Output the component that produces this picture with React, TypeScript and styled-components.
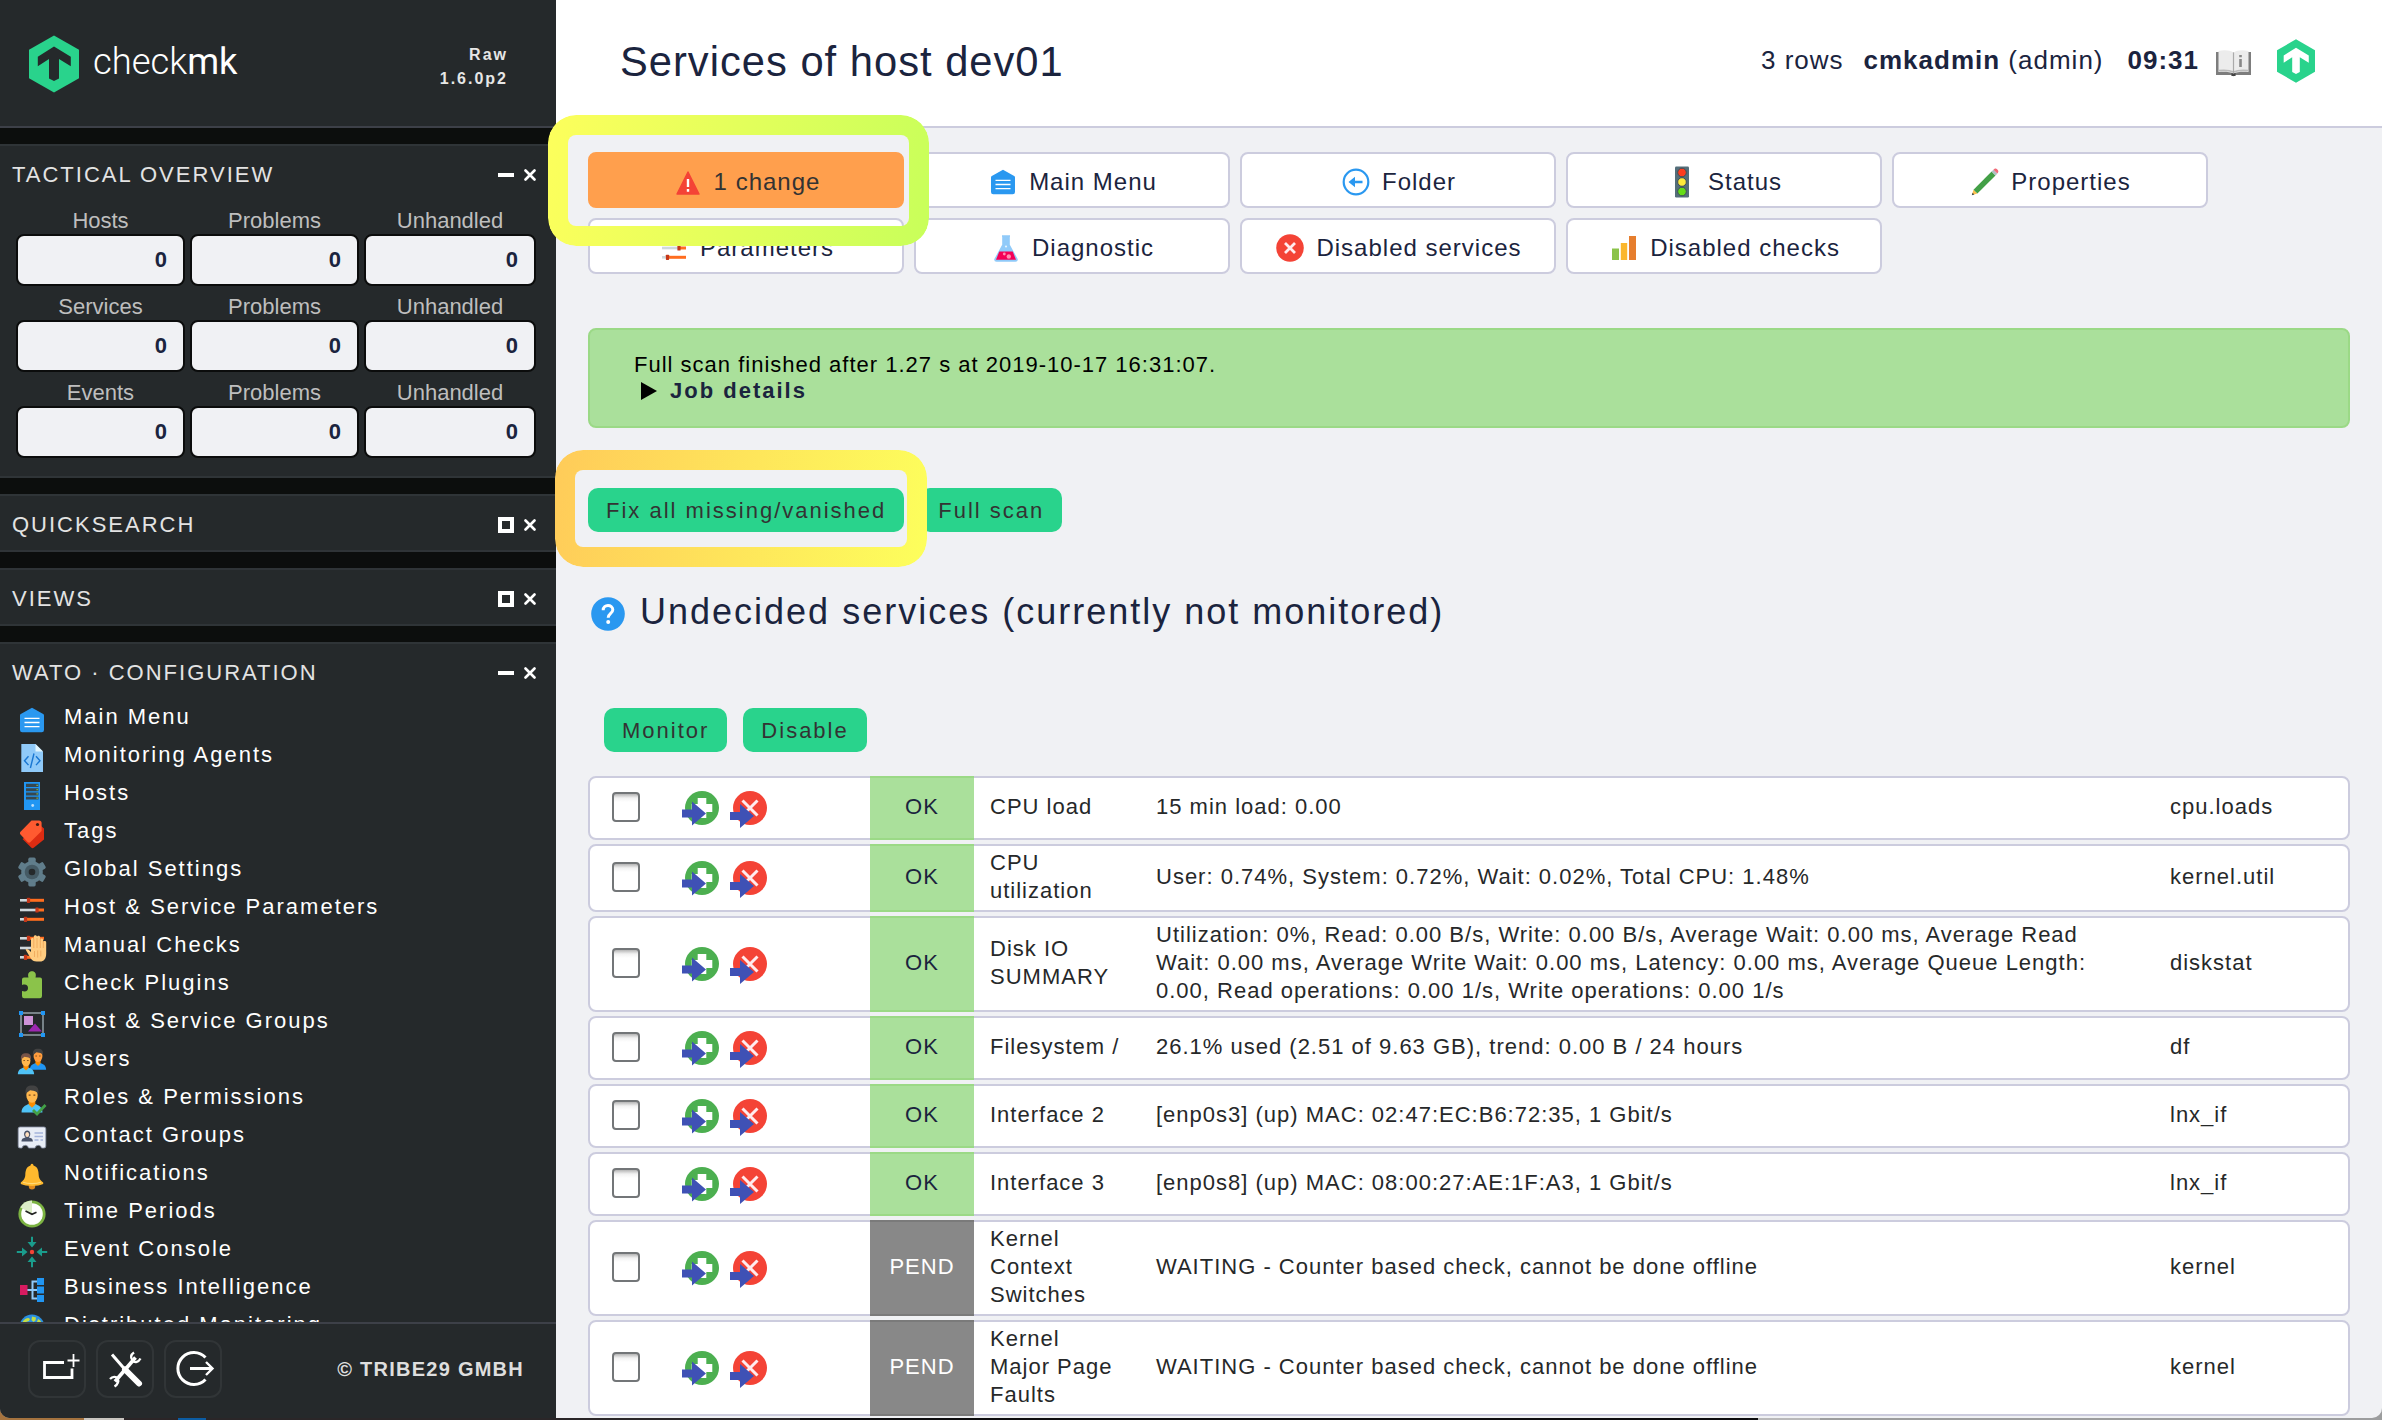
import React from 'react';
import styled, { createGlobalStyle } from 'styled-components';

const font = '"Liberation Sans", Arial, Helvetica, sans-serif';
const navy = '#1b243e';

const GlobalStyle = createGlobalStyle`
  * { box-sizing: border-box; }
  body { margin: 0; background: #1c1c1e; font-family: ${font}; }
`;

/* ---------- shell ---------- */

const Desktop = styled.div`
  position: relative;
  width: 2382px;
  height: 1420px;
  overflow: hidden;
  background: linear-gradient(90deg, #a5733f 0 84px, #c9c5c0 84px 124px, #2b2527 124px 178px, #0b5ca3 178px 206px, #2a2628 206px 800px, #0d0d0f 800px 1758px, #b9b9ba 1758px 1820px, #9c9d9e 1820px);
`;
const BrowserWindow = styled.div`
  display: grid;
  grid-template-columns: 556px 1fr;
  height: 1418px;
  border-radius: 0 0 10px 10px;
  overflow: hidden;
  background: #f0f1f4;
`;
const Sidebar = styled.aside`
  display: flex;
  flex-direction: column;
  min-height: 0;
  height: 1418px;
  background: #25292b;
`;
const Main = styled.main`
  display: flex;
  flex-direction: column;
  min-width: 0;
`;

/* ---------- sidebar ---------- */

const Brand = styled.header`
  display: flex;
  justify-content: space-between;
  height: 128px;
  flex: none;
  padding: 35px 48px 0 29px;
  border-bottom: 2px solid #3d4048;
`;
const BrandName = styled.div`
  display: flex;
  align-items: flex-start;
  gap: 14px;
`;
const Wordmark = styled.span`
  padding-top: 6px;
  font: 300 36.4px/42px Roboto, ${font};
  color: #fff;
  b { font-weight: 400; }
`;
const Version = styled.div`
  padding-top: 8px;
  font-size: 16px;
  font-weight: bold;
  line-height: 24px;
  letter-spacing: 2px;
  text-align: right;
  color: #e6e6e6;
`;
const Snapins = styled.div`
  display: flex;
  flex-direction: column;
  flex: 1;
  min-height: 0;
  overflow: hidden;
  gap: 16px;
  padding-top: 16px;
  background: #0c0e0d;
`;
const Snapin = styled.section<{ $height?: number }>`
  flex: none;
  height: ${p => (p.$height ? `${p.$height}px` : 'auto')};
  border-top: 2px solid #2f3437;
  border-bottom: 2px solid #2f3437;
  background: #25292b;
`;
const SnapinHead = styled.div`
  display: flex;
  align-items: center;
  height: 54px;
  padding: 3px 20px 0 12px;
`;
const SnapinTitle = styled.h2`
  flex: 1;
  margin: 0;
  font-size: 22px;
  font-weight: normal;
  line-height: 26px;
  letter-spacing: 2px;
  color: #e3e3e3;
`;
const SnapinControls = styled.div`
  display: flex;
  align-items: center;
  gap: 10px;
`;
const Tactical = styled.div`
  display: grid;
  grid-template-columns: 169px 169px 172px;
  column-gap: 5px;
  padding: 5px 0 0 16px;
`;
const TacticalLabel = styled.div`
  height: 29px;
  padding-top: 3px;
  font-size: 22px;
  line-height: 25px;
  text-align: center;
  color: #bebebe;
`;
const TacticalValue = styled.div`
  height: 52px;
  margin-bottom: 5px;
  padding-right: 16px;
  border: 2px solid #0b0c0c;
  border-radius: 8px;
  background: #f0f1f4;
  color: ${navy};
  font-size: 22px;
  font-weight: bold;
  line-height: 48px;
  text-align: right;
`;
const Menu = styled.ul`
  margin: 0;
  padding: 6px 0 0 16px;
  list-style: none;
`;
const MenuItem = styled.li`
  display: flex;
  align-items: flex-start;
  gap: 16px;
  height: 38px;
`;
const MenuText = styled.span`
  font-size: 22px;
  line-height: 25px;
  letter-spacing: 2px;
  color: #fff;
`;
const Footer = styled.footer`
  display: flex;
  align-items: flex-start;
  flex: none;
  height: 96px;
  padding: 16px 32px 0 28px;
  gap: 10px;
  border-top: 2px solid #3d4048;
  background: #25292b;
`;
const FootButton = styled.button`
  display: block;
  width: 58px;
  height: 58px;
  padding: 0;
  border: 2px solid #313537;
  border-radius: 12px;
  background: none;
`;
const Copyright = styled.div`
  flex: 1;
  padding-top: 18px;
  font-size: 20px;
  font-weight: bold;
  line-height: 22px;
  letter-spacing: 1.25px;
  text-align: right;
  color: #dedede;
`;

/* ---------- main ---------- */

const TopBar = styled.header`
  display: flex;
  align-items: flex-start;
  height: 128px;
  flex: none;
  padding: 38px 67px 0 64px;
  border-bottom: 2px solid #ccccde;
  background: #fff;
  color: ${navy};
`;
const PageTitle = styled.h1`
  flex: 1;
  margin: 0;
  padding-top: 1px;
  font-size: 41.7px;
  font-weight: normal;
  line-height: 46px;
  letter-spacing: 1px;
`;
const Status = styled.div`
  display: flex;
  padding-top: 7px;
  font-size: 26px;
  line-height: 30px;
  letter-spacing: 1px;
  white-space: pre;
`;
const StatusPart = styled.span<{ $gap?: number; $bold?: boolean; $drop?: number }>`
  margin-left: ${p => p.$gap ?? 0}px;
  padding-top: ${p => p.$drop ?? 0}px;
  font-weight: ${p => (p.$bold ? 'bold' : 'normal')};
`;
const Body = styled.div`
  display: flex;
  flex-direction: column;
  padding: 24px 32px 0 32px;
`;
const ContextLinks = styled.nav`
  display: flex;
  flex-wrap: wrap;
  gap: 10px;
`;
const ContextButton = styled.a<{ $hot?: boolean }>`
  display: flex;
  align-items: center;
  justify-content: center;
  gap: 10px;
  width: 316px;
  height: 56px;
  padding-top: 3px;
  border: 2px solid ${p => (p.$hot ? '#ff9f4d' : '#ccccde')};
  border-radius: 8px;
  background: ${p => (p.$hot ? '#ff9f4d' : '#fff')};
  color: ${p => (p.$hot ? '#333' : navy)};
  font-size: 24px;
  line-height: 28px;
  letter-spacing: 1px;
`;
const ScanResult = styled.div`
  height: 100px;
  margin-top: 54px;
  padding: 22px 44px;
  border: 2px solid #9bd986;
  border-radius: 8px;
  background: #aae09b;
  color: #000;
  font-size: 22px;
  line-height: 26px;
  letter-spacing: 1px;
`;
const JobDetails = styled.div`
  display: flex;
  align-items: center;
  gap: 13px;
  padding-left: 7px;
  color: ${navy};
  font-weight: bold;
  letter-spacing: 2px;
`;
const Actions = styled.div<{ $top: number; $indent?: number }>`
  display: flex;
  gap: 16px;
  margin-top: ${p => p.$top}px;
  padding-left: ${p => p.$indent ?? 0}px;
`;
const ActionButton = styled.button`
  height: 44px;
  padding: 1px 18px 0;
  border: none;
  border-radius: 10px;
  background: #29d38c;
  color: #333;
  font: 22px/43px ${font};
  letter-spacing: 2px;
  white-space: nowrap;
`;
const SectionHead = styled.div`
  display: flex;
  gap: 15px;
  height: 43px;
  margin-top: 59px;
  padding-left: 3px;
`;
const SectionIcon = styled.div`padding-top: 6px;`;
const SectionTitle = styled.h3`
  margin: 0;
  font-size: 36px;
  font-weight: normal;
  line-height: 42px;
  letter-spacing: 2px;
  color: ${navy};
`;
const Services = styled.div`
  display: flex;
  flex-direction: column;
  gap: 4px;
  margin-top: 24px;
`;
const ServiceRow = styled.div`
  display: grid;
  grid-template-columns: 68px 212px 104px 167px 1014px 1fr;
  min-height: 64px;
  border: 2px solid #ccccde;
  border-radius: 8px;
  background: #fff;
  color: #262829;
  font-size: 22px;
  line-height: 28px;
  letter-spacing: 1px;
`;
const Cell = styled.div<{ $left: number; $right?: number }>`
  display: flex;
  align-items: center;
  padding: 3px ${p => p.$right ?? 0}px 5px ${p => p.$left}px;
`;
const Lines = styled.div`white-space: pre-line;`;
const State = styled.div<{ $pend: boolean }>`
  display: flex;
  align-items: center;
  justify-content: center;
  margin: -2px 0;
  padding-bottom: 2px;
  border: solid ${p => (p.$pend ? '#7a7a7a' : '#9bd986')};
  border-width: 2px 0;
  background: ${p => (p.$pend ? '#888' : '#aae09b')};
  color: ${p => (p.$pend ? '#fff' : navy)};
`;
const CheckBox = styled.span`
  display: block;
  width: 28px;
  height: 30px;
  border: 2px solid #737678;
  border-radius: 4px;
  background: linear-gradient(#b5b5b5 0, #f2f2f2 4px, #fff 8px);
`;
const MoveIcons = styled.div`
  display: flex;
  gap: 10px;
  padding: 6px 0 0 24px;
`;
const Marker = styled.div<{ $x: number; $y: number; $w: number; $h: number; $colors: string }>`
  position: absolute;
  left: ${p => p.$x}px;
  top: ${p => p.$y}px;
  width: ${p => p.$w}px;
  height: ${p => p.$h}px;
  padding: 20px;
  border-radius: 28px;
  background: linear-gradient(100deg, ${p => p.$colors});
  mask: linear-gradient(#000 0 0) content-box, linear-gradient(#000 0 0);
  mask-composite: exclude;
  pointer-events: none;
`;
const Svg = styled.svg`display: block; flex: none;`;

/* ---------- icons ---------- */

const Sliders = () => (
  <g>
    {[[6.3, 12.5], [16, 21], [25.3, 9.5]].map(([y, x]) => (
      <g key={y}>
        <path d={`M4 ${y}H${x}`} stroke="#cfd8dc" strokeWidth="2.6" />
        <path d={`M${x} ${y}H28`} stroke="#ff6d1f" strokeWidth="3" />
        <rect x={x - 1.6} y={y - 2.6} width="3.2" height="5.2" rx=".6" fill="#c4371a" />
      </g>
    ))}
  </g>
);
const Head = ({ x, y, s = 1, hair, skin, shirt }: { x: number; y: number; s?: number; hair: string; skin: string; shirt: string }) => (
  <g transform={`translate(${x} ${y}) scale(${s})`}>
    <path d="M-11 28c0-6 4-7.500 7.500-9l3.500 2 3.500-2C7 20.500 11 22 11 28z" fill={shirt} />
    <path d="M-3.500 14h7v5.500L0 23l-3.500-3.500z" fill="#fb8c00" />
    <ellipse cx="0" cy="9.500" rx="6" ry="8" fill={skin} />
    <path d="M-6.800 8C-7.500 1-4-.500 0-.500S7.500 1 6.800 8L5 6.500C3 5 0 5-2 4.500L-5.500 7z" fill={hair} />
    <path d="M-3.500 9.500h2M1.500 9.500h2" stroke="#784719" strokeWidth="1.300" />
  </g>
);

const glyphs: Record<string, React.ReactNode> = {
  menu: <g><path d="M16 3.700l11.200 6.300c.5.300.8.800.8 1.400V26a2.300 2.300 0 0 1-2.300 2.300H6.300A2.300 2.300 0 0 1 4 26V11.400c0-.6.300-1.100.8-1.400z" fill="#2a98f0" /><path d="M8.500 14.300h15M8.500 18.500h15M8.500 22.700h15" stroke="#fff" strokeWidth="1.300" /></g>,
  agents: <g><path d="M5.300 2h14.200L27 9.500V30H5.300z" fill="#90caf9" /><path d="M19.500 2v7.500H27z" fill="#e1f5fe" /><path d="M12.500 14.300L8.500 18.700l4 4.400M20 14.300l4 4.400-4 4.400M18 11.500l-3.600 14.500" fill="none" stroke="#1976d2" strokeWidth="1.400" /></g>,
  hosts: <g><path d="M8 2h16v28H8z" fill="#2196f3" /><path d="M10 3.700h12.500v3.200H10zM10 8.300h12.500v2.900H10zM10 12.500h12.500v2.900H10zM10 16.700h12.500v2.900H10z" fill="#37474f" /><path d="M20.500 4.700h1.300V6h-1.300zM20.500 9h1.300v1.300h-1.300zM20.500 13.200h1.300v1.300h-1.300zM20.500 17.500h1.300v1.300h-1.300z" fill="#8bc34a" /><circle cx="16.700" cy="25.500" r="1.400" fill="#bbdefb" /></g>,
  tags: <g><path d="M25 8l3 2.500v11L18 29.500c-1 .9-1.900.9-2.800 0L6.500 21z" fill="#dd2c12" /><path d="M15.500 2.500H23a2.600 2.600 0 0 1 2.600 2.600v8L14.500 24c-.9.900-2 .900-2.900 0L4.500 16.500c-.8-.800-.8-1.900 0-2.700z" fill="#ff5a30" /><circle cx="21.500" cy="6.500" r="1.600" fill="#3e1b12" /></g>,
  gear: <g><g fill="#607d8b">{[0, 60, 120].map(a => <rect key={a} x="12.300" y="1.600" width="7.400" height="28.800" rx="1.600" transform={`rotate(${a} 16 16)`} />)}<circle cx="16" cy="16" r="10.800" /></g><circle cx="16" cy="16" r="7.300" fill="#455a64" /><circle cx="16" cy="16" r="3.300" fill="#25292b" /></g>,
  params: <Sliders />,
  manual: <g><Sliders /><path d="M9.500 17.500c1.500-1.500 3 0 5.500 2.500V7.500c0-2 2.600-2 2.800 0V4.800c0-2 3-2 3.200 0v.4c.2-2 3-2 3.200.2v2.500c.2-1.800 2.900-1.700 3 .2v2c.2-1.700 3-1.500 3 .3v11c0 5.500-2.500 8-6 8h-3.500c-3 0-4.500-1-6-3.200z" fill="#ffcc80" /><path d="M17.800 7v9M21 6v10M24.300 7v9M27.300 9v7M18.500 19v6M21.700 18.500v7M24.800 18.500v6" stroke="#efa95c" strokeWidth=".9" /></g>,
  puzzle: <path d="M12.500 7.500C11.300 3.500 13 1.200 16 1.200s4.700 2.300 3.500 6.300H24a2 2 0 0 1 2 2V26a2.200 2.200 0 0 1-2.200 2.200H8.200A2.200 2.200 0 0 1 6 26v-5c4 1.200 6-.3 6-3s-2-4.200-6-3V9.500a2 2 0 0 1 2-2z" fill="#8bc34a" />,
  groups: <g><rect x="5" y="5" width="22" height="22" fill="none" stroke="#b0bec5" strokeWidth="1.200" /><path d="M8 8h9v9H8z" fill="#ce93d8" /><path d="M12 23.500l7-8 7 8z" fill="#9c27b0" /><path d="M3 3h4v4H3zM25 3h4v4h-4zM3 25h4v4H3zM25 25h4v4h-4z" fill="#2196f3" /></g>,
  users: <g><Head x={22} y={3} s={0.74} hair="#424242" skin="#ff9d3e" shirt="#2196f3" /><Head x={10} y={7.500} s={0.74} hair="#795548" skin="#ffb74d" shirt="#4fc3f7" /></g>,
  roles: <g><Head x={16} y={2} s={0.95} hair="#424242" skin="#ffb74d" shirt="#4fc3f7" /><path d="M17 26l4 4 8.500-9" fill="none" stroke="#43a047" strokeWidth="2.800" /></g>,
  contacts: <g><path d="M4 5h24a1.800 1.800 0 0 1 1.800 1.800V24A1.800 1.800 0 0 1 28 26h-2.500a3.300 3.300 0 0 0-6.500 0H12.500a3.300 3.300 0 0 0-6.500 0H4a1.800 1.800 0 0 1-1.800-2V6.800A1.800 1.800 0 0 1 4 5z" fill="#e8edf6" stroke="#8a93a8" strokeWidth=".8" /><path d="M5.500 19.500c0-3 2-3.500 4-4-2.500-2.500-1.500-7 1.700-7s4.200 4.500 1.700 7c2 .5 4 1 4 4z" fill="#485268" /><ellipse cx="11.200" cy="12.500" rx="1.900" ry="2.600" fill="#ffe0c0" /><path d="M18.500 11H27M18.500 14.500H27M18.500 18h4M24.500 18H27" stroke="#a4b4dc" strokeWidth="1.400" /></g>,
  bell: <g><circle cx="16" cy="26.300" r="3.200" fill="#e08a1e" /><path d="M14.800 4.500a1.300 1.300 0 0 1 2.400 0l.3 1C22 7 22.500 11 22.700 15c.2 4 2 5.500 4.500 7.500v1.500c-5 2.500-17.400 2.500-22.400 0v-1.500C7.300 20.500 9 19 9.300 15c.2-4 .7-8 5.200-9.500z" fill="#ffb92e" /><path d="M7 22.200c5 1.800 13 1.800 18 0" fill="none" stroke="#ffd978" strokeWidth="1.200" /></g>,
  clock: <g><circle cx="16" cy="16" r="13.600" fill="#7cb342" /><circle cx="16" cy="16" r="10.800" fill="#fff" /><path d="M16 16V2.400A13.600 13.600 0 0 0 4.200 9.300z" fill="#dcedc8" /><path d="M9.500 13l6.500 3.200 4.500-2" fill="none" stroke="#222" strokeWidth="1.700" /></g>,
  event: <g fill="#1a9c8c">{[0, 90, 180, 270].map(a => <path key={a} transform={`rotate(${a} 16 16)`} d="M15 .800h2V6h3.500L16 11.500 11.500 6H15z" />)}<circle cx="16" cy="16" r="2.200" fill="#f44336" /></g>,
  bi: <g><path d="M11 16h10M21.500 7.500h-5v17h5" fill="none" stroke="#90caf9" strokeWidth="2" /><path d="M4 11h7.500v10H4z" fill="#d81b60" /><path d="M21 4h7v7h-7zM21 12.500h7v7h-7zM21 21h7v7h-7z" fill="#2196f3" /></g>,
  globe: <g><circle cx="16" cy="15" r="12.500" fill="#2a8fe0" /><path d="M6 11c1.500-3.500 4-5 6.500-5l1.500 1-1 2-3 1-2 3zM16 4.500l4 1-.5 3-2 1.500-2-2zM22 7c2.500 1 3.500 3 4.500 6l-3-1-2.500-2z" fill="#c2dc45" /></g>,
  warning: <g><path d="M16 6l11 22h-22z" fill="#f44336" strokeLinejoin="round" stroke="#f44336" strokeWidth="1.400" /><path d="M16 13v8M16 23v2.800" stroke="#fff" strokeWidth="2.400" /></g>,
  folder: <g><circle cx="16" cy="16" r="12.300" fill="#fff" stroke="#2a98f0" strokeWidth="2.200" /><path d="M8.500 16l6.500-5.200v3.900h7.500v2.600H15v3.900z" fill="#2a98f0" /></g>,
  lights: <g><rect x="9" y=".5" width="14" height="31" rx="1.200" fill="#546e7a" /><circle cx="16" cy="6.500" r="4.300" fill="#ff3d1f" stroke="#3f4f57" /><circle cx="16" cy="16" r="4.300" fill="#ffeb3b" stroke="#3f4f57" /><circle cx="16" cy="25.500" r="4.300" fill="#64dd17" stroke="#3f4f57" /></g>,
  pencil: <g><path d="M2.800 29.300L4.500 23.700 8.400 27.600z" fill="#ffc04d" /><path d="M2.800 29.300l.8-2.500 1.700 1.700z" fill="#37474f" /><path d="M4.500 23.700L22.600 5.600l3.900 3.900L8.400 27.600z" fill="#43a047" /><path d="M22.600 5.600l1.800-1.800 3.900 3.900-1.800 1.800z" fill="#b0bec5" /><path d="M24.400 3.800l.9-.7c1-.8 2-.6 2.800.2l.7.700c.7.800.8 1.900.1 2.700l-.6.900z" fill="#f06a78" /></g>,
  flask: <g><path d="M12 4h8M13 5v8L5 27.500A1.500 1.500 0 0 0 6.500 29h19a1.500 1.500 0 0 0 1.500-1.500L19 13V5z" fill="#90caf9" stroke="#90caf9" strokeWidth="1.600" /><path d="M9.300 19.500h13.400L26 27.800H6z" fill="#f50057" /><circle cx="14.300" cy="22" r="1.400" fill="#ff8fb1" /><circle cx="18.800" cy="24.500" r="2.200" fill="#ff8fb1" /><circle cx="16" cy="14.500" r="1.100" fill="#e3f2fd" /></g>,
  disabled: <g><circle cx="16" cy="16" r="13.800" fill="#f44336" /><path d="M11 11l10 10M21 11L11 21" stroke="#ffebee" strokeWidth="2.800" /></g>,
  bars: <g><path d="M4 16.500h7V28H4z" fill="#8bc34a" /><path d="M12.800 11h6.400v17h-6.400z" fill="#fbb72c" /><path d="M21 4h7v24h-7z" fill="#e67e2e" /></g>,
};
const Glyph = ({ name }: { name: string }) => <Svg width="32" height="32" viewBox="0 0 32 32">{glyphs[name]}</Svg>;

const Hexagon = ({ w, h, arrow }: { w: number; h: number; arrow: string }) => (
  <Svg width={w} height={h} viewBox="0 0 50 57">
    <path d="M25 0l25 14.300v28.400L25 57 0 42.700V14.300z" fill="#29d38c" />
    <path d="M25 11l16.800 10.200v9.600L30 23.500V43l-5 2.500-5-2.500V23.500L8.800 30.800v-9.600z" fill={arrow} />
  </Svg>
);
const Minimize = () => <Svg width="16" height="16"><path d="M0 8h16" stroke="#fff" strokeWidth="4" /></Svg>;
const Restore = () => <Svg width="16" height="16"><path d="M2 2h12v12H2z" fill="none" stroke="#fff" strokeWidth="4" /></Svg>;
const Close = () => <Svg width="12" height="12"><path d="M1.500 1.500l9 9M10.500 1.500l-9 9" stroke="#fff" strokeWidth="2.600" strokeLinecap="round" /></Svg>;
const Book = () => (
  <Svg width="35" height="27" viewBox="0 0 35 27">
    <path d="M0 2h35v23H19.500c0 1.500-4 1.500-4 0H0z" fill="#7d7d7d" />
    <path d="M15.500 22.500h4V26h-4z" fill="#444" />
    <path d="M2.500 1C8-.500 14 0 17.500 2.500 21-0 27-.500 32.500 1v21c-5-.5-11-.5-15 1.500-4-2-10-2-15-1.500z" fill="#ececec" />
    <path d="M2.500 20.500c5-.5 11-.5 15 1.500 4-2 10-2 15-1.500" fill="none" stroke="#bbb" strokeWidth="1.600" />
    <path d="M17.500 3v20" stroke="#aaa" strokeWidth="1.200" />
    <path d="M24.500 5v2.300M24.500 9v8" stroke="#888" strokeWidth="2.600" />
  </Svg>
);
const Arrow = ({ y }: { y: number }) => <path d={`M0 ${y + 8}h10V${y}l14 12-14 12v-8H0z`} fill="#3f51b5" />;
const MoveIn = () => (
  <Svg width="38" height="38"><circle cx="20" cy="17" r="17" fill="#4caf50" /><path d="M15.700 7h8.600v6h6v8h-6v6h-8.600v-6h-6v-8h6z" fill="#fff" /><Arrow y={10.5} /></Svg>
);
const MoveOut = () => (
  <Svg width="38" height="38"><circle cx="20" cy="17" r="17" fill="#f44336" /><path d="M12.500 9.500l15 15M27.500 9.500l-15 15" stroke="#ffebee" strokeWidth="3" /><Arrow y={13} /></Svg>
);
const Help = () => (
  <Svg width="34" height="34" viewBox="0 0 34 34"><circle cx="17" cy="17" r="16.800" fill="#2a98f0" /><path d="M12.200 13.200c0-6.200 9.600-6 9.600-.4 0 3.700-4.600 3.600-4.600 8" fill="none" stroke="#fff" strokeWidth="3" /><circle cx="17.200" cy="25" r="2" fill="#fff" /></Svg>
);
const AddSnapin = () => <Svg width="54" height="54"><path d="M34 20.500H14.500V35.500H42V26.500" fill="none" stroke="#fff" strokeWidth="2.800" /><path d="M43.500 12v13M37.500 18.500h12" stroke="#fff" strokeWidth="1.800" /></Svg>;
const Tools = () => (
  <Svg width="54" height="54" fill="none" stroke="#fff">
    <path d="M14 12.500l13 15" strokeWidth="3" /><path d="M27 27.500l14 14" strokeWidth="6" strokeLinecap="round" />
    <path d="M17 39.500L37.500 15.500" strokeWidth="3.600" />
    <path d="M36 10.500c-3 2-4 5-1.500 8s6 1.500 8-2M12 37c2.500-2.500 6-3 7.500-.5s.5 6-3 8" strokeWidth="2.400" />
  </Svg>
);
const Logout = () => <Svg width="54" height="54" fill="none" stroke="#fff" strokeWidth="3"><path d="M39.500 15.500A16 16 0 1 0 39.500 37.500" /><path d="M24 26.500h22" /><path d="M40 20l6.500 6.500L40 33" strokeWidth="2.400" /></Svg>;

/* ---------- data ---------- */

const menu: [string, string][] = [
  ['menu', 'Main Menu'], ['agents', 'Monitoring Agents'], ['hosts', 'Hosts'], ['tags', 'Tags'],
  ['gear', 'Global Settings'], ['params', 'Host & Service Parameters'], ['manual', 'Manual Checks'],
  ['puzzle', 'Check Plugins'], ['groups', 'Host & Service Groups'], ['users', 'Users'],
  ['roles', 'Roles & Permissions'], ['contacts', 'Contact Groups'], ['bell', 'Notifications'],
  ['clock', 'Time Periods'], ['event', 'Event Console'], ['bi', 'Business Intelligence'],
  ['globe', 'Distributed Monitoring'],
];
const links: [string, string][] = [
  ['warning', '1 change'], ['menu', 'Main Menu'], ['folder', 'Folder'], ['lights', 'Status'], ['pencil', 'Properties'],
  ['params', 'Parameters'], ['flask', 'Diagnostic'], ['disabled', 'Disabled services'], ['bars', 'Disabled checks'],
];
const waiting = 'WAITING - Counter based check, cannot be done offline';
const services: [string, string, string, string][] = [
  ['OK', 'CPU load', '15 min load: 0.00', 'cpu.loads'],
  ['OK', 'CPU\nutilization', 'User: 0.74%, System: 0.72%, Wait: 0.02%, Total CPU: 1.48%', 'kernel.util'],
  ['OK', 'Disk IO\nSUMMARY', 'Utilization: 0%, Read: 0.00 B/s, Write: 0.00 B/s, Average Wait: 0.00 ms, Average Read\nWait: 0.00 ms, Average Write Wait: 0.00 ms, Latency: 0.00 ms, Average Queue Length:\n0.00, Read operations: 0.00 1/s, Write operations: 0.00 1/s', 'diskstat'],
  ['OK', 'Filesystem /', '26.1% used (2.51 of 9.63 GB), trend: 0.00 B / 24 hours', 'df'],
  ['OK', 'Interface 2', '[enp0s3] (up) MAC: 02:47:EC:B6:72:35, 1 Gbit/s', 'lnx_if'],
  ['OK', 'Interface 3', '[enp0s8] (up) MAC: 08:00:27:AE:1F:A3, 1 Gbit/s', 'lnx_if'],
  ['PEND', 'Kernel\nContext\nSwitches', waiting, 'kernel'],
  ['PEND', 'Kernel\nMajor Page\nFaults', waiting, 'kernel'],
];

const SnapinHeader = ({ title, open }: { title: string; open?: boolean }) => (
  <SnapinHead>
    <SnapinTitle>{title}</SnapinTitle>
    <SnapinControls>{open ? <Minimize /> : <Restore />}<Close /></SnapinControls>
  </SnapinHead>
);

export default function App() {
  return (
    <Desktop>
      <GlobalStyle />
      <BrowserWindow>
        <Sidebar>
          <Brand>
            <BrandName>
              <Hexagon w={50} h={58} arrow="#25292b" />
              <Wordmark>check<b>mk</b></Wordmark>
            </BrandName>
            <Version>Raw<br />1.6.0p2</Version>
          </Brand>
          <Snapins>
            <Snapin $height={334}>
              <SnapinHeader title="TACTICAL OVERVIEW" open />
              <Tactical>
                {['Hosts', 'Services', 'Events'].map(kind => (
                  <React.Fragment key={kind}>
                    {[kind, 'Problems', 'Unhandled'].map(l => <TacticalLabel key={l}>{l}</TacticalLabel>)}
                    {[0, 1, 2].map(i => <TacticalValue key={i}>0</TacticalValue>)}
                  </React.Fragment>
                ))}
              </Tactical>
            </Snapin>
            <Snapin $height={58}><SnapinHeader title="QUICKSEARCH" /></Snapin>
            <Snapin $height={58}><SnapinHeader title="VIEWS" /></Snapin>
            <Snapin>
              <SnapinHeader title="WATO · CONFIGURATION" open />
              <Menu>
                {menu.map(([icon, text]) => <MenuItem key={text}><Glyph name={icon} /><MenuText>{text}</MenuText></MenuItem>)}
              </Menu>
            </Snapin>
          </Snapins>
          <Footer>
            <FootButton><AddSnapin /></FootButton>
            <FootButton><Tools /></FootButton>
            <FootButton><Logout /></FootButton>
            <Copyright>© TRIBE29 GMBH</Copyright>
          </Footer>
        </Sidebar>
        <Main>
          <TopBar>
            <PageTitle>Services of host dev01</PageTitle>
            <Status>
              <StatusPart>3 rows</StatusPart>
              <StatusPart $gap={20} $bold>cmkadmin</StatusPart>
              <StatusPart> (admin)</StatusPart>
              <StatusPart $gap={24} $bold>09:31</StatusPart>
              <StatusPart $gap={17} $drop={5}><Book /></StatusPart>
            </Status>
            <StatusPart $gap={26} $drop={1}><Hexagon w={38} h={44} arrow="#fff" /></StatusPart>
          </TopBar>
          <Body>
            <ContextLinks>
              {links.map(([icon, text]) => <ContextButton key={text} $hot={icon === 'warning'}><Glyph name={icon} />{text}</ContextButton>)}
            </ContextLinks>
            <ScanResult>
              Full scan finished after 1.27 s at 2019-10-17 16:31:07.
              <JobDetails><Svg width="16" height="18"><path d="M0 0l16 9L0 18z" fill="#000" /></Svg>Job details</JobDetails>
            </ScanResult>
            <Actions $top={60}>
              <ActionButton>Fix all missing/vanished</ActionButton>
              <ActionButton>Full scan</ActionButton>
            </Actions>
            <SectionHead>
              <SectionIcon><Help /></SectionIcon>
              <SectionTitle>Undecided services (currently not monitored)</SectionTitle>
            </SectionHead>
            <Actions $top={74} $indent={16}>
              <ActionButton>Monitor</ActionButton>
              <ActionButton>Disable</ActionButton>
            </Actions>
            <Services>
              {services.map(([state, name, output, plugin]) => (
                <ServiceRow key={name}>
                  <Cell $left={22}><CheckBox /></Cell>
                  <Cell $left={0}><MoveIcons><MoveIn /><MoveOut /></MoveIcons></Cell>
                  <State $pend={state === 'PEND'}>{state}</State>
                  <Cell $left={16}><Lines>{name}</Lines></Cell>
                  <Cell $left={15} $right={30}><Lines>{output}</Lines></Cell>
                  <Cell $left={15}>{plugin}</Cell>
                </ServiceRow>
              ))}
            </Services>
          </Body>
        </Main>
      </BrowserWindow>
      <Marker $x={548} $y={115} $w={381} $h={131} $colors="#fdff5c, #c8ff5a" />
      <Marker $x={555} $y={450} $w={372} $h={117} $colors="#ffcb59, #fdff5c" />
    </Desktop>
  );
}
